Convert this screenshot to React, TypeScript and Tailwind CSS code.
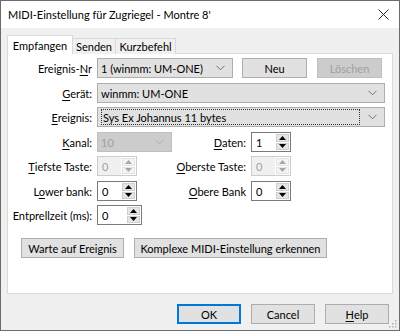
import React from 'react';

const font = { fontFamily: 'Lato, "Noto Sans", sans-serif' };

const Chevron = ({ color = '#606060' }: { color?: string }) => (
  <svg width="9" height="6" viewBox="0 0 9 6" className="shrink-0">
    <path d="M0.5 0.8 L4.5 4.8 L8.5 0.8" fill="none" stroke={color} strokeWidth="1" />
  </svg>
);

const U = ({ children }: { children: React.ReactNode }) => <span className="underline underline-offset-2">{children}</span>;

const Combo = ({ text, className, disabled, focus }: any) => (
  <div
    className={
      'h-[20px] flex items-center justify-between pl-[3px] pr-[7px] border ' +
      (disabled ? 'bg-[#cccccc] border-[#bfbfbf] text-[#a0a0a0] ' : 'bg-[#e1e1e1] border-[#adadad] text-black ') +
      className
    }
  >
    {focus ? (
      <span className="flex-1 h-[16px] mr-[8px] border border-dotted border-[#333] flex items-center pl-[1px] whitespace-nowrap">{text}</span>
    ) : (
      <span className="whitespace-nowrap">{text}</span>
    )}
    <Chevron color={disabled ? '#b0b0b0' : '#707070'} />
  </div>
);

const Arrow = ({ up, disabled }: { up?: boolean; disabled?: boolean }) => (
  <svg width="7" height="4" viewBox="0 0 7 4">
    <path d={up ? 'M0 4 L3.5 0 L7 4 Z' : 'M0 0 L7 0 L3.5 4 Z'} fill={disabled ? '#a8a8a8' : '#000'} />
  </svg>
);

const Spin = ({ value, disabled, w = 'w-[40px]' }: { value: string; disabled?: boolean; w?: string }) => (
  <div
    className={
      'h-[20px] flex border shrink-0 ' +
      w +
      (disabled ? ' bg-[#f0f0f0] border-[#cccccc] text-[#a0a0a0]' : ' bg-white border-[#7a7a7a] text-black')
    }
  >
    <div className="flex-1 flex items-center pl-[4px]">{value}</div>
    <div className="w-[15px] flex flex-col gap-[1px] p-[1px] bg-white">
      <div className={'flex-1 flex items-center justify-center ' + (disabled ? 'bg-[#f4f4f4] border border-[#e3e3e3]' : 'bg-[#e5e5e5] border border-[#cfcfcf]')}>
        <Arrow up disabled={disabled} />
      </div>
      <div className={'flex-1 flex items-center justify-center ' + (disabled ? 'bg-[#f4f4f4] border border-[#e3e3e3]' : 'bg-[#e5e5e5] border border-[#cfcfcf]')}>
        <Arrow disabled={disabled} />
      </div>
    </div>
  </div>
);

const Btn = ({ children, className = '', def, disabled }: any) => (
  <div
    className={
      'h-[20px] flex items-center justify-center whitespace-nowrap shrink-0 ' +
      (def
        ? 'border-2 border-[#0078d7] bg-[#e1e1e1]'
        : disabled
          ? 'border border-[#bfbfbf] bg-[#cccccc] text-[#a0a0a0]'
          : 'border border-[#adadad] bg-[#e1e1e1]') +
      ' ' +
      className
    }
  >
    {children}
  </div>
);

const Label = ({ children, className = 'w-[85px]' }: any) => (
  <div className={'text-right pr-[5px] shrink-0 whitespace-nowrap ' + className}>{children}</div>
);

export default function App() {
  return (
    <div style={font} className="w-[400px] h-[331px] border border-[#6b6b6b] bg-[#f0f0f0] text-[11px] text-black flex flex-col leading-none relative">
      <div className="h-[27px] bg-white flex items-center justify-between pl-[7px] pr-[10px] shrink-0">
        <span className="whitespace-nowrap">MIDI-Einstellung für Zugriegel - Montre 8'</span>
        <svg width="11" height="11" viewBox="0 0 11 11">
          <path d="M0.5 0.5 L10.5 10.5 M10.5 0.5 L0.5 10.5" stroke="#222" strokeWidth="1" />
        </svg>
      </div>

      <div className="flex items-end mt-[7px] ml-[6px] h-[19px] relative z-10">
        <div className="h-[19px] w-[66px] bg-white border border-b-0 border-[#d9d9d9] flex items-center justify-center">Empfangen</div>
        <div className="h-[16px] w-[43px] bg-[#f0f0f0] border border-l-0 border-b-0 border-[#d9d9d9] flex items-center justify-center">Senden</div>
        <div className="h-[16px] w-[60px] bg-[#f0f0f0] border border-l-0 border-b-0 border-[#d9d9d9] flex items-center justify-center">Kurzbefehl</div>
      </div>

      <div className="mx-[6px] -mt-px h-[241px] bg-white border border-[#d9d9d9] flex flex-col pl-[4px]">
        <div className="mt-[4px] flex items-center">
          <Label>
            Ereignis-<U>N</U>r
          </Label>
          <Combo text="1 (winmm: UM-ONE)" className="w-[136px]" />
          <Btn className="w-[65px] ml-[9px]">Neu</Btn>
          <Btn disabled className="w-[65px] ml-[10px]">Löschen</Btn>
        </div>
        <div className="mt-[5px] flex items-center">
          <Label>
            <U>G</U>erät:
          </Label>
          <Combo text="winmm: UM-ONE" className="w-[288px]" />
        </div>
        <div className="mt-[4px] flex items-center">
          <Label>
            <U>E</U>reignis:
          </Label>
          <Combo text="Sys Ex Johannus 11 bytes" className="w-[288px]" focus />
        </div>
        <div className="mt-[5px] flex items-center">
          <Label>
            <U>K</U>anal:
          </Label>
          <Combo text="10" disabled className="w-[75px]" />
          <Label className="w-[79px]">
            <U>D</U>aten:
          </Label>
          <Spin value="1" />
        </div>
        <div className="mt-[4px] flex items-center">
          <Label>
            <U>T</U>iefste Taste:
          </Label>
          <Spin value="0" disabled />
          <Label className="w-[114px]">
            <U>O</U>berste Taste:
          </Label>
          <Spin value="0" disabled />
        </div>
        <div className="mt-[5px] flex items-center">
          <Label>
            L<U>o</U>wer bank:
          </Label>
          <Spin value="0" />
          <Label className="w-[114px]">
            <U>O</U>bere Bank
          </Label>
          <Spin value="0" />
        </div>
        <div className="mt-[4px] flex items-center">
          <Label>Entprellzeit (ms):</Label>
          <Spin value="0" w="w-[45px]" />
        </div>
        <div className="mt-[13px] flex items-center ml-[9px] gap-[10px]">
          <Btn className="w-[103px]">Warte auf Ereignis</Btn>
          <Btn className="w-[193px]">Komplexe MIDI-Einstellung erkennen</Btn>
        </div>
      </div>

      <div className="flex justify-end gap-[10px] mt-[10px] mr-[10px]">
        <Btn def className="w-[64px]">OK</Btn>
        <Btn className="w-[64px]">Cancel</Btn>
        <Btn className="w-[64px]">
          <U>H</U>elp
        </Btn>
      </div>

      <svg width="8" height="8" viewBox="0 0 8 8" className="absolute right-[2px] bottom-[2px]">
        <rect x="6" y="0" width="1.5" height="1.5" fill="#b0b0b0" />
        <rect x="3" y="3" width="1.5" height="1.5" fill="#b0b0b0" />
        <rect x="6" y="3" width="1.5" height="1.5" fill="#b0b0b0" />
        <rect x="0" y="6" width="1.5" height="1.5" fill="#b0b0b0" />
        <rect x="3" y="6" width="1.5" height="1.5" fill="#b0b0b0" />
        <rect x="6" y="6" width="1.5" height="1.5" fill="#b0b0b0" />
      </svg>
    </div>
  );
}
